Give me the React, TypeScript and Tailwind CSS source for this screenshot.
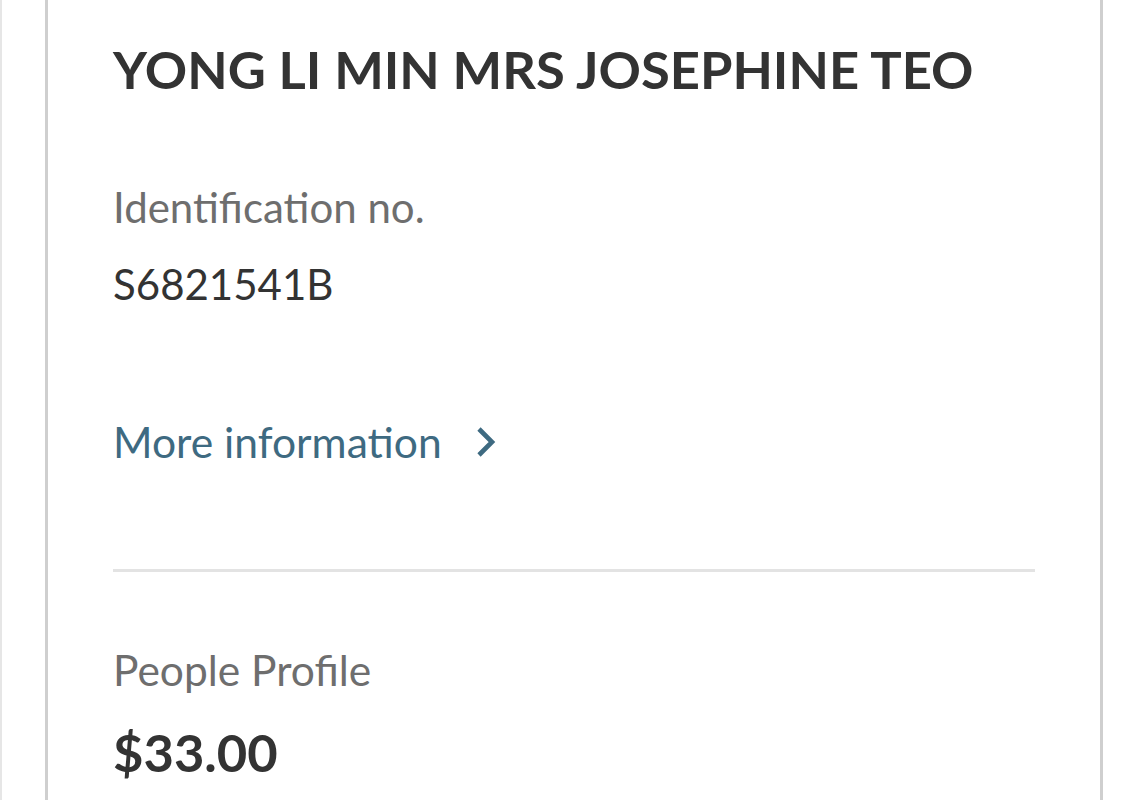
export default function App() {
  return (
    <div className="min-h-screen w-full bg-white flex" style={{ fontFamily: "Lato, 'Noto Sans', sans-serif" }}>
      <div className="w-[2px] bg-[#e6e6e6]" />
      <div className="ml-[43px] w-[1058px] min-h-[800px] border-x-[3px] border-[#cfcfcf] px-[65px]">
        <h1 className="mt-[43px] text-[52.5px] leading-none font-bold text-[#333333] whitespace-nowrap">
          YONG LI MIN MRS JOSEPHINE TEO
        </h1>
        <div className="mt-[90px] text-[42px] leading-none text-[#6e6e6e]">Identification no.</div>
        <div className="mt-[35px] text-[42px] leading-none text-[#333333]">S6821541B</div>
        <a href="#" className="mt-[116px] flex items-center text-[42.6px] leading-none text-[#3e6a81]">
          <span>More information</span>
          <svg className="ml-[34px] w-[20px] h-[32px]" viewBox="0 0 20 32" fill="none" stroke="currentColor" strokeWidth="4.6" strokeLinecap="butt" strokeLinejoin="miter">
            <path d="M3 3l13 13L3 29" />
          </svg>
        </a>
        <div className="mt-[106px] h-[3px] bg-[#e3e3e3]" />
        <div className="mt-[77px] text-[42.5px] leading-none text-[#6e6e6e]">People Profile</div>
        <div className="mt-[34px] text-[52.5px] leading-none font-bold text-[#333333]">$33.00</div>
      </div>
    </div>
  );
}
